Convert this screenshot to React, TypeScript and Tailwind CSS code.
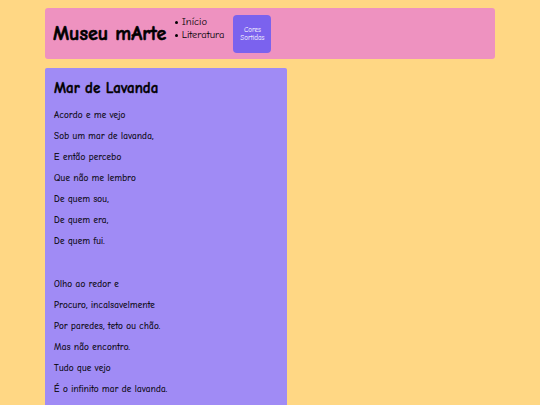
const lines1 = [
  'Acordo e me vejo',
  'Sob um mar de lavanda,',
  'E então percebo',
  'Que não me lembro',
  'De quem sou,',
  'De quem era,',
  'De quem fui.',
];

const lines2 = [
  'Olho ao redor e',
  'Procuro, incalsavelmente',
  'Por paredes, teto ou chão.',
  'Mas não encontro.',
  'Tudo que vejo',
  'É o infinito mar de lavanda.',
];

export default function App() {
  return (
    <div className="min-h-[405px] bg-[#ffd784] font-['Comic_Sans_MS','Comic_Neue',cursive] text-black">
      <div className="mx-auto w-[450px] pt-2">
        <header className="flex items-center h-[51px] bg-[#ee92c0] rounded-[3px] px-2">
          <h1 className="text-[20px] font-bold leading-none [-webkit-text-stroke:0.6px_black]">Museu mArte</h1>
          <ul className="ml-[9px] -mt-[9px] text-[10.5px] leading-[13px]">
            <li className="flex items-center gap-[4px]">
              <span className="w-[2.5px] h-[2.5px] rounded-full bg-black" />
              Início
            </li>
            <li className="flex items-center gap-[4px]">
              <span className="w-[2.5px] h-[2.5px] rounded-full bg-black" />
              Literatura
            </li>
          </ul>
          <button className="ml-[9px] w-[38px] h-[38px] rounded-[4px] bg-[#7b62ee] text-white text-[7px] leading-[8px] flex items-center justify-center text-center">
            Cores<br />Sortidas
          </button>
        </header>

        <section className="mt-[9px] w-[242px] bg-[#a08bf5] rounded-t-[2px] px-[9px] pt-[10px] pb-4">
          <h2 className="text-[15px] font-bold leading-[20px] [-webkit-text-stroke:0.4px_black]">Mar de Lavanda</h2>
          <div className="mt-[7px] text-[9px] leading-[21px] tracking-[0.25px] [-webkit-text-stroke:0.15px_black]">
            {lines1.map((l) => (
              <p key={l}>{l}</p>
            ))}
            <p className="h-[22px]" />
            {lines2.map((l) => (
              <p key={l}>{l}</p>
            ))}
          </div>
        </section>
      </div>
    </div>
  );
}
